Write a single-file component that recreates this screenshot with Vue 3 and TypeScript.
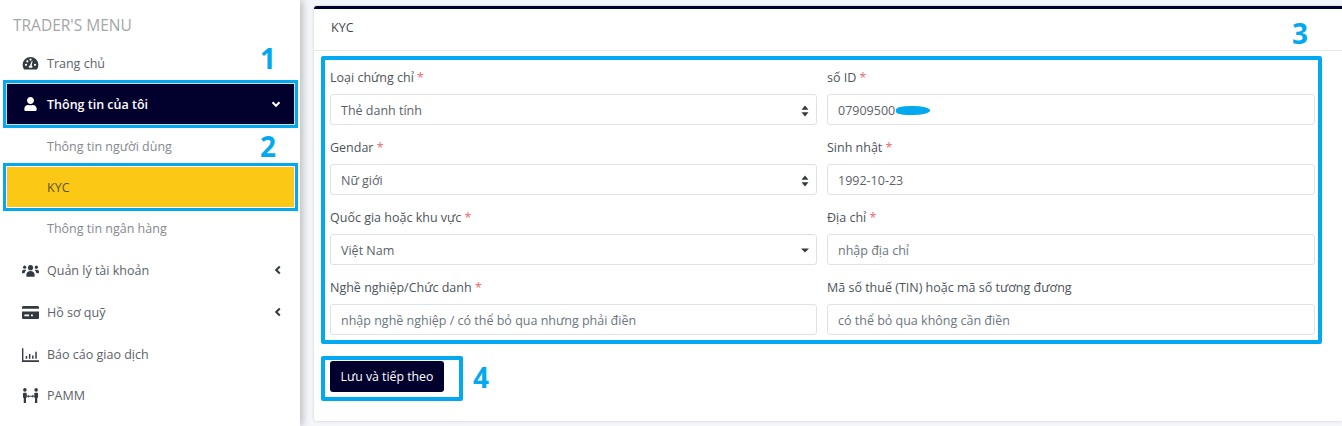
<script setup lang="ts">
interface Field { label: string; req: boolean; kind: 'select' | 'input'; value?: string; placeholder?: string; arrow?: 'both' | 'down' }
const fields: Field[] = [
  { label: 'Loại chứng chỉ', req: true, kind: 'select', value: 'Thẻ danh tính', arrow: 'both' },
  { label: 'số ID', req: true, kind: 'input', value: '07909500' },
  { label: 'Gendar', req: true, kind: 'select', value: 'Nữ giới', arrow: 'both' },
  { label: 'Sinh nhật', req: true, kind: 'input', value: '1992-10-23' },
  { label: 'Quốc gia hoặc khu vực', req: true, kind: 'select', value: 'Việt Nam', arrow: 'down' },
  { label: 'Địa chỉ', req: true, kind: 'input', placeholder: 'nhập địa chỉ' },
  { label: 'Nghề nghiệp/Chức danh', req: true, kind: 'input', placeholder: 'nhập nghề nghiệp / có thể bỏ qua nhưng phải điền' },
  { label: 'Mã số thuế (TIN) hoặc mã số tương đương', req: false, kind: 'input', placeholder: 'có thể bỏ qua không cần điền' },
]
</script>

<template>
  <div class="page">
    <aside class="sidebar">
      <div class="menu-title">TRADER'S MENU</div>
      <a class="item">
        <svg class="ico" viewBox="0 0 18 16"><path fill-rule="evenodd" d="M9 1a8.400 8.400 0 0 0-8.400 8.400c0 1.600.4 3.100 1.200 4.400.3.400.7.600 1.200.6h12c.5 0 .9-.2 1.200-.6.8-1.300 1.200-2.800 1.200-4.400A8.400 8.400 0 0 0 9 1zM9 2.600a1.200 1.200 0 1 1 0 2.400 1.200 1.200 0 0 1 0-2.400zM4.200 10.600a1.200 1.200 0 1 1 0-2.400 1.200 1.200 0 0 1 0 2.400zM5.600 6.800a1.200 1.200 0 1 1 0-2.400 1.200 1.200 0 0 1 0 2.400zM10.600 12.400H7.400a1.700 1.700 0 0 1 1-2.400l2-4.800c.2-.4.9-.2.8.3l-1 4.600c.6.400 1 1 1 1.700 0 .2 0 .4-.6.6zM13.800 10.600a1.200 1.200 0 1 1 0-2.400 1.200 1.200 0 0 1 0 2.400z"/></svg>
        <span>Trang chủ</span>
      </a>
      <a class="item item-dark">
        <svg class="ico user" viewBox="0 0 448 512"><path d="M224 256c70.700 0 128-57.300 128-128S294.700 0 224 0 96 57.300 96 128s57.300 128 128 128zm89.600 32h-16.700c-22.200 10.200-46.900 16-72.900 16s-50.600-5.800-72.900-16h-16.700C60.200 288 0 348.200 0 422.400V464c0 26.500 21.500 48 48 48h352c26.500 0 48-21.500 48-48v-41.600c0-74.200-60.200-134.400-134.400-134.400z"/></svg>
        <span>Thông tin của tôi</span>
        <svg class="chev" viewBox="0 0 10 10"><path d="M1.500 3.200 5 6.800l3.500-3.600" fill="none" stroke="currentColor" stroke-width="2"/></svg>
      </a>
      <a class="sub">Thông tin người dùng</a>
      <a class="sub sub-active">KYC</a>
      <a class="sub">Thông tin ngân hàng</a>
      <a class="item">
        <svg class="ico" viewBox="0 0 18 14"><circle cx="9" cy="4" r="2.700"/><path d="M4.600 13v-1.600C4.600 9 6.600 7.400 9 7.400s4.400 1.600 4.400 4V13c0 .4-.4.6-.7.6H5.300c-.4 0-.7-.2-.7-.6z"/><circle cx="2.800" cy="3.500" r="1.700"/><circle cx="15.200" cy="3.500" r="1.700"/><path d="M0 8.500c0-1.300.9-2.200 2-2.200h1.500c.4 0 .8.100 1.100.3-1 .8-1.700 2-1.900 3.300H.8C.3 9.900 0 9.500 0 9zM18 8.500c0-1.300-.9-2.200-2-2.200h-1.500c-.4 0-.8.100-1.100.3 1 .8 1.700 2 1.900 3.300h1.900c.5 0 .8-.4.8-.9z"/></svg>
        <span>Quản lý tài khoản</span>
        <svg class="chev dark" viewBox="0 0 10 10"><path d="M6.800 1.500 3.200 5l3.600 3.500" fill="none" stroke="currentColor" stroke-width="2"/></svg>
      </a>
      <a class="item">
        <svg class="ico" viewBox="0 0 18 14"><path fill-rule="evenodd" d="M1.500 0h15c.8 0 1.500.7 1.500 1.500V3H0V1.500C0 .7.700 0 1.500 0zM0 6h18v6.500c0 .8-.7 1.500-1.500 1.500h-15C.7 14 0 13.300 0 12.500zM2.500 9v2h5V9zm7 0v2h2V9z"/></svg>
        <span>Hồ sơ quỹ</span>
        <svg class="chev dark" viewBox="0 0 10 10"><path d="M6.800 1.500 3.200 5l3.600 3.500" fill="none" stroke="currentColor" stroke-width="2"/></svg>
      </a>
      <a class="item">
        <svg class="ico" viewBox="0 0 16 14"><path d="M0 1h1.300v11.400H16V14H0zM3.500 8.500h1.400v2.500H3.500zM6.500 6.500h1.400V11H6.500zM9.500 8h1.400v3H9.500zM12.500 4.500h1.400V11h-1.400z"/></svg>
        <span>Báo cáo giao dịch</span>
      </a>
      <a class="item last">
        <svg class="ico" viewBox="0 0 18 16"><circle cx="3" cy="2" r="1.900"/><circle cx="15" cy="2" r="1.900"/><path d="M1 6c0-.6.400-1 1-1h2c.6 0 1 .4 1 1v4.500H4.200V16H1.800v-5.500H1zM13 6c0-.6.4-1 1-1h2c.6 0 1 .4 1 1v4.500h-.8V16h-2.400v-5.500H13zM7 8.200h4V7l2 1.700-2 1.700V9.200H7v1.200L5 8.700 7 7z"/></svg>
        <span>PAMM</span>
      </a>
    </aside>

    <main class="main">
      <section class="card">
        <header class="card-head">KYC</header>
        <form class="form" @submit.prevent>
          <div class="grid">
            <div v-for="f in fields" :key="f.label" class="field">
              <label class="lbl">{{ f.label }}<em v-if="f.req"> *</em></label>
              <div class="control">
                <select v-if="f.kind === 'select'" class="inp sel"><option>{{ f.value }}</option></select>
                <input v-else class="inp" :value="f.value" :placeholder="f.placeholder" />
                <svg v-if="f.arrow === 'both'" class="arrow" viewBox="0 0 8 12"><path d="M4 .5 7.500 4.800H.5zM4 11.500.5 7.200h7z"/></svg>
                <svg v-if="f.arrow === 'down'" class="arrow small" viewBox="0 0 8 5"><path d="M0 .5h8L4 4.500z"/></svg>
                <span v-if="f.label === 'số ID'" class="scribble"></span>
              </div>
            </div>
          </div>
          <div class="btn-box"><button class="btn" type="submit">Lưu và tiếp theo</button></div>
        </form>
      </section>
    </main>

    <span class="num n1">1</span>
    <span class="num n2">2</span>
    <span class="num n3">3</span>
    <span class="num n4">4</span>
  </div>
</template>

<style>
html, body { margin: 0; padding: 0; background: #f4f6f9; overflow: hidden; }
</style>

<style scoped>
.page {
  position: relative;
  display: flex;
  width: 1342px;
  height: 426px;
  overflow: hidden;
  background: #f4f6f9;
  font-family: "Open Sans", "Noto Sans", sans-serif;
  font-size: 12.500px;
  color: #444b52;
}
.sidebar {
  flex: 0 0 300px;
  box-sizing: border-box;
  height: 426px;
  padding: 0 6px 0 7px;
  background: #fff;
  box-shadow: 3px 0 7px rgba(0, 0, 0, .22);
  display: flex;
  flex-direction: column;
  z-index: 1;
}
.menu-title {
  flex: 0 0 42px;
  padding: 15px 0 0 6px;
  box-sizing: border-box;
  font-size: 15.500px;
  line-height: 21px;
  color: #a3a6a9;
}
.item {
  flex: 0 0 42px;
  display: flex;
  align-items: center;
  padding: 0 11px 0 15px;
  color: #5c6268;
  box-sizing: border-box;
}
.item.last { flex-basis: 41px; }
.item span { flex: 1; }
.ico { width: 17px; height: 15px; margin-right: 8px; fill: #343a40; flex: none; }
.ico.user { height: 14px; fill: #fff; }
.chev { width: 10px; height: 10px; flex: none; color: #fff; }
.chev.dark { color: #343a40; }
.item-dark {
  flex: 0 0 40px;
  margin: 0 0 1px;
  padding-right: 13px;
  background: #02012e;
  color: #fff;
  font-weight: 600;
  box-shadow: 0 0 0 1px #d8d8e0, 0 0 0 4px #03a9f0;
}
.sub {
  flex: 0 0 42px;
  display: flex;
  align-items: center;
  padding-left: 40px;
  color: #85898e;
  box-sizing: border-box;
}
.sub-active {
  flex: 0 0 40px;
  margin: 0 0 1px;
  background: #fbc816;
  color: #5c5230;
  box-shadow: 0 0 0 1px #fff, 0 0 0 4px #03a9f0;
}
.sub-active + .sub { flex-basis: 41px; }
.main { flex: 1; padding: 6px 0 5px 14px; min-width: 0; }
.card {
  box-sizing: border-box;
  height: 415px;
  background: #fff;
  border-top: 3px solid #02012e;
  border-radius: 3px 0 0 3px;
  box-shadow: 0 0 3px rgba(0, 0, 0, .18);
}
.card-head {
  height: 42px;
  padding: 9px 0 0 17px;
  box-sizing: border-box;
  border-bottom: 1px solid #e6e8ea;
  font-size: 12.500px;
  line-height: 20px;
  color: #3f464d;
}
.form { padding: 5px 20px 0 7px; }
.grid {
  box-sizing: border-box;
  border: 4px solid #03a9f0;
  border-radius: 2px;
  padding: 6px 3px 4px 5px;
  display: grid;
  grid-template-columns: 487px 488px;
  column-gap: 10px;
  row-gap: 10px;
}
.lbl {
  display: block;
  height: 24px;
  margin-bottom: 4px;
  line-height: 24px;
  color: #4c5359;
}
.lbl em { font-style: normal; color: #ee6b73; }
.control { position: relative; height: 32px; }
.inp {
  box-sizing: border-box;
  display: block;
  width: 100%;
  height: 31px;
  margin-top: 1px;
  padding: 2px 10px 0;
  border: 1px solid #dee2e6;
  border-radius: 3px;
  background: #fff;
  color: #5b6268;
  font: inherit;
  outline: none;
  appearance: none;
}
.inp::placeholder { color: #6c757d; opacity: 1; }
.arrow {
  position: absolute;
  right: 8px;
  top: 11px;
  width: 8px;
  height: 12px;
  fill: #343a40;
}
.arrow.small { height: 5px; top: 14px; }
.scribble {
  position: absolute;
  left: 69px;
  top: 12px;
  width: 34px;
  height: 9px;
  border-radius: 50% 60% 60% 40%;
  background: #03a9f0;
}
.btn-box {
  box-sizing: border-box;
  width: 142px;
  height: 45px;
  margin-top: 12px;
  padding: 1px 0 0 5px;
  border: 4px solid #03a9f0;
  border-radius: 2px;
}
.btn {
  display: block;
  width: 114px;
  height: 31px;
  padding: 0;
  border: 0;
  border-radius: 3px;
  background: #02012e;
  color: #fff;
  font: inherit;
  font-size: 12.300px;
  font-weight: 500;
}
.num {
  position: absolute;
  color: #03a9f0;
  font-family: "Open Sans", sans-serif;
  font-size: 28px;
  font-weight: 700;
  line-height: 30px;
  z-index: 2;
}
.n1 { left: 260px; top: 43px; }
.n2 { left: 260px; top: 131px; }
.n3 { left: 1292px; top: 18px; }
.n4 { left: 473px; top: 362px; }
</style>
